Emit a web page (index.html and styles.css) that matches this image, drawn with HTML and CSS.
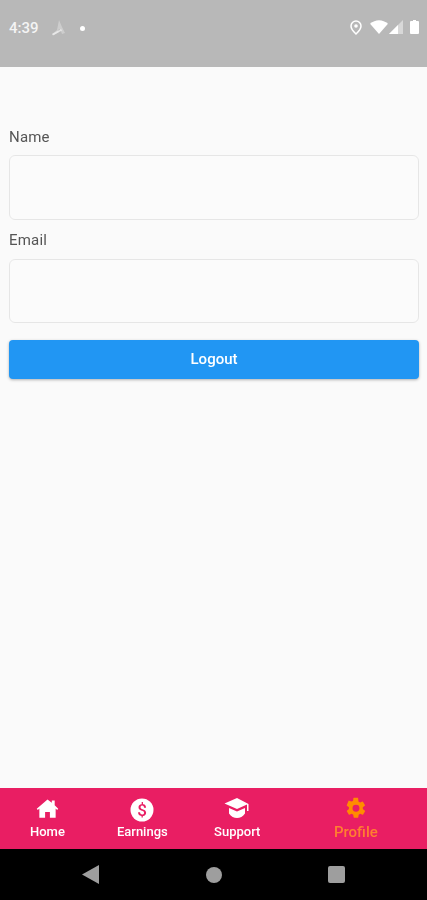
FILE: index.html
```html
<!DOCTYPE html>
<html lang="en">
<head>
<meta charset="utf-8">
<title>Profile</title>
<link rel="stylesheet" href="styles.css">
</head>
<body>
<div class="screen">
  <header class="status">
    <div class="status-left">
      <span class="time">4:39</span>
      <svg class="st-fan" width="18" height="18" viewBox="0 0 18 18"><path d="M9 1l3 7 3 6-3 1-2-5-2 1 1 2-5 3-2-1 5-4 1-5z" fill="#fff" opacity=".3"/><path d="M2 15l9-5 1 1.500-9 5z" fill="#fff" opacity=".55"/></svg>
      <span class="dot"></span>
    </div>
    <div class="status-right">
      <svg class="st-pin" width="12" height="15" viewBox="0 0 12 15"><path d="M6 1a5 5 0 0 0-5 5c0 3.400 5 8 5 8s5-4.600 5-8a5 5 0 0 0-5-5z" fill="none" stroke="#fff" stroke-width="1.500"/><circle cx="6" cy="6" r="1.800" fill="#fff"/></svg>
      <svg class="st-wifi" width="18" height="14" viewBox="0 0 18 14"><path d="M0 3.800C5.300-1.100 12.700-1.100 18 3.800L9 14z" fill="#fff"/></svg>
      <svg class="st-signal" width="14" height="14" viewBox="0 0 14 14"><path d="M14 0v14H0z" fill="#fff" opacity=".45"/><path d="M9 5v9H0z" fill="#fff"/></svg>
      <svg class="st-batt" width="9" height="14" viewBox="0 0 9 14"><path d="M3 0h3v1h2a1 1 0 0 1 1 1v11a1 1 0 0 1-1 1H1a1 1 0 0 1-1-1V2a1 1 0 0 1 1-1h2z" fill="#fff"/></svg>
    </div>
  </header>

  <main class="content">
    <form class="form">
      <label class="label">Name</label>
      <div class="field"></div>
      <label class="label label-email">Email</label>
      <div class="field"></div>
      <button class="logout" type="button">Logout</button>
    </form>
  </main>

  <nav class="tabs">
    <div class="tab">
      <svg class="tab-icon" width="23" height="24" viewBox="0 -1 24 25"><path d="M12 .5L.8 10.200l1.100 1.200L3.500 10v9.500h6v-6h5v6h6V10l1.600 1.400 1.100-1.200L19.500 6.500V1.500h-3v2.400z" fill="#fff"/></svg>
      <span class="tab-label">Home</span>
    </div>
    <div class="tab">
      <svg class="tab-icon" width="24" height="24" viewBox="0 0 24 24"><circle cx="12" cy="12" r="11.500" fill="#fff"/><text class="dollar" x="12" y="18" text-anchor="middle">$</text></svg>
      <span class="tab-label">Earnings</span>
    </div>
    <div class="tab">
      <svg class="tab-icon" width="26" height="24" viewBox="0 0 26 24"><path d="M13 0L.5 5.500 13 11l10-4.400V13h1.500V6z" fill="#fff"/><path d="M5 10v5.500C7 18.500 10 20 13 20s6-1.500 8-4.500V10l-8 3.500z" fill="#fff"/></svg>
      <span class="tab-label">Support</span>
    </div>
    <div class="tab tab-active">
      <svg class="tab-icon" width="22" height="24" viewBox="0 1 24 26"><path fill-rule="evenodd" d="M19.400 13a7.500 7.500 0 0 0 0-2l2.200-1.700a.5.500 0 0 0 .1-.7l-2.100-3.600a.5.500 0 0 0-.6-.2l-2.600 1a7.500 7.500 0 0 0-1.700-1L14.300 1a.5.500 0 0 0-.5-.4H9.700a.5.500 0 0 0-.5.4l-.4 2.800a7.500 7.500 0 0 0-1.700 1l-2.600-1a.5.500 0 0 0-.6.2L2 8.600a.5.500 0 0 0 .1.700L4.300 11a7.500 7.500 0 0 0 0 2l-2.200 1.700a.5.500 0 0 0-.1.700l2.100 3.600a.5.500 0 0 0 .6.2l2.600-1c.5.400 1.100.7 1.700 1l.4 2.800a.5.500 0 0 0 .5.400h4.100a.5.500 0 0 0 .5-.4l.4-2.800c.6-.3 1.200-.6 1.700-1l2.600 1a.5.500 0 0 0 .6-.2l2.100-3.600a.5.500 0 0 0-.1-.7zM12 15.800a3.800 3.800 0 1 1 0-7.600 3.800 3.800 0 0 1 0 7.600z" fill="#ff8c00"/></svg>
      <span class="tab-label">Profile</span>
    </div>
  </nav>

  <footer class="sysnav">
    <svg width="17" height="19" viewBox="0 0 17 19"><path d="M17 0v19L0 9.500z" fill="#9e9e9e"/></svg>
    <span class="home-btn"></span>
    <span class="recent-btn"></span>
  </footer>
</div>
</body>
</html>
```

FILE: styles.css
```css
* { box-sizing: border-box; }
html, body { margin: 0; padding: 0; }
body { font-family: Roboto, "Noto Sans", sans-serif; background: #fafafa; }

.screen { width: 427px; height: 900px; display: flex; flex-direction: column; overflow: hidden; filter: blur(.45px); }

.status {
  height: 67px;
  background: #b8b8b8;
  display: flex;
  justify-content: space-between;
  align-items: flex-start;
  padding: 18px 8px 0 9px;
  flex: none;
}
.status-left, .status-right { display: flex; align-items: center; height: 18px; }
.status-left { margin-top: 1px; }
.time { color: #f4f4f4; font-size: 15px; font-weight: 500; width: 41px; }
.st-fan { margin-right: 12px; }
.dot { width: 5px; height: 5px; border-radius: 50%; background: #fff; }
.st-pin { margin-right: 8px; }
.st-wifi { margin-right: 1px; }
.st-signal { margin-right: 7px; }

.content { flex: 1; padding: 60px 8px 0 9px; }
.form { display: flex; flex-direction: column; }
.label { font-size: 15px; line-height: 20px; color: #555; letter-spacing: .2px; height: 28px; }
.label-email { height: 19px; margin-top: 10px; margin-bottom: 10px; }
.field { height: 64.500px; border: 1.500px solid #e6e6e6; border-radius: 6px; background: #fbfbfb; }
.logout {
  margin-top: 17px;
  height: 38.500px;
  border: 0;
  border-radius: 4px;
  background: #2196f3;
  color: #fff;
  font-family: inherit;
  font-size: 15px;
  font-weight: 500;
  box-shadow: 0 1px 3px rgba(0,0,0,.3);
}

.tabs { height: 61px; flex: none; background: #e91e63; display: flex; }
.tab { flex: 1 1 0; display: flex; flex-direction: column; align-items: center; justify-content: flex-start; padding-top: 10px; color: #fff; }
.tab-active { flex: 1.500 1 0; color: #ff7f30; }
.tab-icon { height: 24px; display: block; overflow: visible; }
.tab-label { font-size: 13px; font-weight: 500; line-height: 16px; margin-top: 2px; }
.tab-active .tab-label { font-size: 15px; font-weight: 500; }
.dollar { font-family: Roboto, sans-serif; font-size: 17px; font-weight: 500; fill: #e91e63; }

.sysnav { height: 51px; flex: none; background: #000; display: flex; align-items: center; padding: 0 82px; justify-content: space-between; }
.home-btn { width: 16px; height: 16px; border-radius: 50%; background: #9e9e9e; }
.recent-btn { width: 17px; height: 17px; border-radius: 2px; background: #9e9e9e; }
```
